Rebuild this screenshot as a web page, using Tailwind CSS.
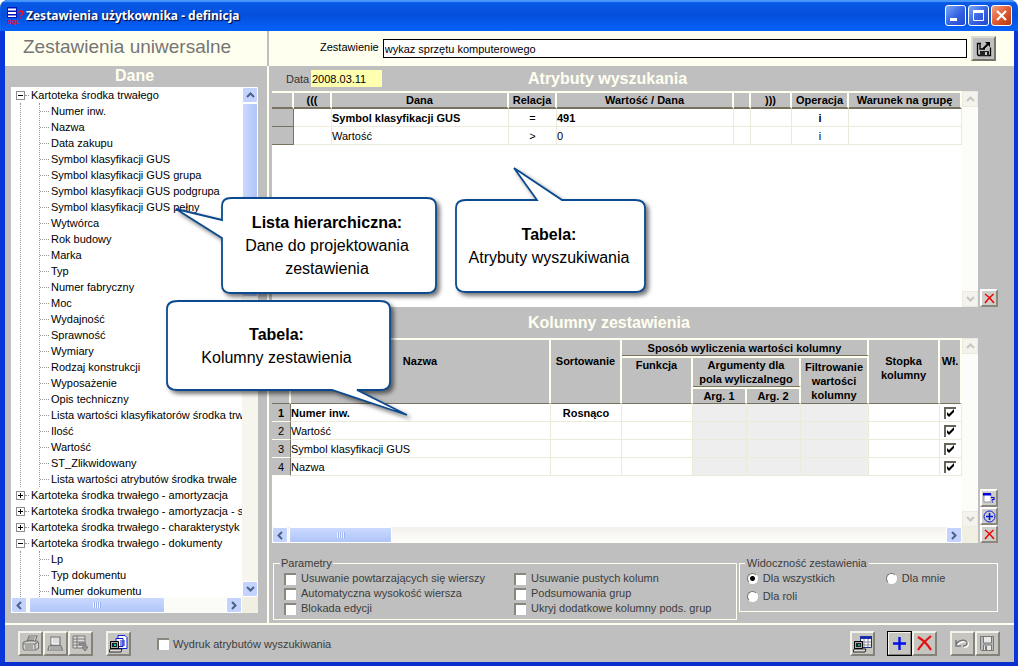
<!DOCTYPE html>
<html lang="pl">
<head>
<meta charset="utf-8">
<title>Zestawienia użytkownika - definicja</title>
<script src="https://cdn.jsdelivr.net/npm/@tailwindcss/browser@4"></script>
</head>
<body class="bg-white font-['Liberation_Sans',Arial,sans-serif] text-[11px] leading-4 text-black">
<svg class="hidden">
  <symbol id="up" viewBox="0 0 9 6"><path d="M1 5 4.500 1.500 8 5" fill="none" stroke="currentColor" stroke-width="2"/></symbol>
  <symbol id="down" viewBox="0 0 9 6"><path d="M1 1 4.500 4.500 8 1" fill="none" stroke="currentColor" stroke-width="2"/></symbol>
  <symbol id="left" viewBox="0 0 6 9"><path d="M5 1 1.500 4.500 5 8" fill="none" stroke="currentColor" stroke-width="2"/></symbol>
  <symbol id="right" viewBox="0 0 6 9"><path d="M1 1 4.500 4.500 1 8" fill="none" stroke="currentColor" stroke-width="2"/></symbol>
  <symbol id="tick" viewBox="0 0 12 12"><path d="M3 5v3l2 2 5-5V2L5 7z" fill="#000"/></symbol>
  <symbol id="cross" viewBox="0 0 11 11"><path d="M1 1c3 2 6 5 9 9M9.500 1C6 4 3 7 1 10" fill="none" stroke="#e00" stroke-width="1.500"/></symbol>
</svg>

<div class="relative flex h-screen flex-col overflow-hidden rounded-t-lg border-b-4 border-[#0a2fd0] bg-[#bfbfbf]">
  <!-- title bar -->
  <header class="flex h-[31px] shrink-0 items-center bg-linear-to-b from-[#0a5be8] via-[#0450dd] to-[#0662fb] pr-1.5 pl-[7px] shadow-[inset_0_2px_1px_#4a97fb]">
    <svg class="h-[18px] w-[17px]" viewBox="0 0 17 18"><path d="M0 0h10v11H0z" fill="#0010b8"/><path d="M1 1.500h8v2H1zM1 5h8v2H1zM1 8.500h8V10H1z" fill="#fff"/><path d="M12 6c0-2.500 4-2.500 4 0 0 1.500-2 1.500-2 3M14 10v1.500" fill="none" stroke="#f01020" stroke-width="1.600"/><text x="0" y="17" font-family="Liberation Sans" font-size="6" font-weight="700" fill="#f01020">SQL</text></svg>
    <h1 class="ml-0.5 flex-1 font-['Noto_Sans',sans-serif] text-xs font-bold text-white [text-shadow:1px_1px_1px_#003]">Zestawienia użytkownika - definicja</h1>
    <div class="flex gap-0.5">
      <button aria-label="Minimalizuj" class="h-[21px] w-[21px] rounded-[3px] border border-white bg-linear-to-br from-[#7fa6f5] via-[#3a66e4] to-[#1d48cc]"><svg viewBox="0 0 19 19"><path d="M4 12h7v3H4z" fill="#fff"/></svg></button>
      <button aria-label="Maksymalizuj" class="h-[21px] w-[21px] rounded-[3px] border border-white bg-linear-to-br from-[#7fa6f5] via-[#3a66e4] to-[#1d48cc]"><svg viewBox="0 0 19 19"><path d="M4.500 5v9.500h10V5" fill="none" stroke="#fff"/><path d="M4 4h11v3H4z" fill="#fff"/></svg></button>
      <button aria-label="Zamknij" class="h-[21px] w-[21px] rounded-[3px] border border-white bg-linear-to-br from-[#f0a080] via-[#e05a30] to-[#b83808]"><svg viewBox="0 0 19 19"><path d="m5 5 9 9m0-9-9 9" stroke="#fff" stroke-width="2.200"/></svg></button>
    </div>
  </header>

  <div class="flex min-h-0 flex-1 flex-col border-r-4 border-l-[5px] border-r-[#0a35d8] border-l-[#0a35d8]">
    <!-- heading strip -->
    <div class="flex h-[35px] shrink-0 bg-[#fffff0]">
      <div class="w-[264px] border-r-2 border-[#bfbfbf] pt-1 pl-[18px] text-[19px] leading-6 text-[#757575]">Zestawienia uniwersalne</div>
      <div class="flex flex-1 items-center pr-[18px] pl-[51px]">
        <label for="nazwa" class="pb-1">Zestawienie</label>
        <input id="nazwa" value="wykaz sprzętu komputerowego" class="ml-1 h-[19px] min-w-0 flex-1 border border-black bg-white px-px">
        <button aria-label="Zapisz jako" class="ml-1 grid h-[25px] w-[25px] place-items-center border-2 border-t-[#dddcd4] border-r-[#77746c] border-b-[#77746c] border-l-[#dddcd4] bg-[#bfbfbf]"><svg class="h-4 w-4" viewBox="0 0 16 16"><path d="M5 2.500H1.500v11l1 1h12v-8M4 2.500V8h5" fill="none" stroke="#000" stroke-width="1.300"/><path d="M4 10h9v5H4z" fill="#222"/><path d="M9 11h2v3H9z" fill="#ccc"/><path d="m7 8 5-5" stroke="#000" stroke-width="1.800"/><path d="M9 1h5v5z" fill="#000"/></svg></button>
      </div>
    </div>

    <main class="flex min-h-0 flex-1">
      <!-- data tree -->
      <section class="flex w-[264px] shrink-0 flex-col border-r-2 border-[#fffff0] pr-[9px] pb-2.5 pl-1.5">
        <h2 class="h-[21px] shrink-0 text-center text-base leading-5 font-bold text-[#fffff0]">Dane</h2>
        <div class="flex min-h-0 flex-1">
          <div class="min-w-0 flex-1 overflow-hidden bg-white pl-[5px] whitespace-nowrap">
            <ul>
              <li>
                <div class="flex h-4 items-center"><button aria-label="Zwiń" class="grid h-[9px] w-[9px] shrink-0 place-items-center border border-[#8c8c8c] bg-white"><span class="h-px w-[5px] bg-black"></span></button><span class="mr-0.5 w-1 shrink-0 border-t border-dotted border-[#999]"></span>Kartoteka środka trwałego</div>
                <div class="ml-1 border-l border-dotted border-[#999]">
                  <ul class="ml-[18px] border-l border-dotted border-[#999] [&>li]:flex [&>li]:h-4 [&>li]:items-center [&>li]:before:mr-0.5 [&>li]:before:w-[9px] [&>li]:before:shrink-0 [&>li]:before:border-t [&>li]:before:border-dotted [&>li]:before:border-[#999] [&>li]:before:content-['']">
                    <li>Numer inw.</li><li>Nazwa</li><li>Data zakupu</li><li>Symbol klasyfikacji GUS</li><li>Symbol klasyfikacji GUS grupa</li><li>Symbol klasyfikacji GUS podgrupa</li><li>Symbol klasyfikacji GUS pełny</li><li>Wytwórca</li><li>Rok budowy</li><li>Marka</li><li>Typ</li><li>Numer fabryczny</li><li>Moc</li><li>Wydajność</li><li>Sprawność</li><li>Wymiary</li><li>Rodzaj konstrukcji</li><li>Wyposażenie</li><li>Opis techniczny</li><li>Lista wartości klasyfikatorów środka trw</li><li>Ilość</li><li>Wartość</li><li>ST_Zlikwidowany</li><li>Lista wartości atrybutów środka trwałe</li>
                  </ul>
                </div>
              </li>
              <li class="flex h-4 items-center"><button aria-label="Rozwiń" class="grid h-[9px] w-[9px] shrink-0 place-items-center border border-[#8c8c8c] bg-white"><svg class="h-[5px] w-[5px]" viewBox="0 0 5 5"><path d="M0 2h5v1H0zM2 0h1v5H2z"/></svg></button><span class="mr-0.5 w-1 shrink-0 border-t border-dotted border-[#999]"></span>Kartoteka środka trwałego - amortyzacja</li>
              <li class="flex h-4 items-center"><button aria-label="Rozwiń" class="grid h-[9px] w-[9px] shrink-0 place-items-center border border-[#8c8c8c] bg-white"><svg class="h-[5px] w-[5px]" viewBox="0 0 5 5"><path d="M0 2h5v1H0zM2 0h1v5H2z"/></svg></button><span class="mr-0.5 w-1 shrink-0 border-t border-dotted border-[#999]"></span>Kartoteka środka trwałego - amortyzacja - s</li>
              <li class="flex h-4 items-center"><button aria-label="Rozwiń" class="grid h-[9px] w-[9px] shrink-0 place-items-center border border-[#8c8c8c] bg-white"><svg class="h-[5px] w-[5px]" viewBox="0 0 5 5"><path d="M0 2h5v1H0zM2 0h1v5H2z"/></svg></button><span class="mr-0.5 w-1 shrink-0 border-t border-dotted border-[#999]"></span>Kartoteka środka trwałego - charakterystyk</li>
              <li>
                <div class="flex h-4 items-center"><button aria-label="Zwiń" class="grid h-[9px] w-[9px] shrink-0 place-items-center border border-[#8c8c8c] bg-white"><span class="h-px w-[5px] bg-black"></span></button><span class="mr-0.5 w-1 shrink-0 border-t border-dotted border-[#999]"></span>Kartoteka środka trwałego - dokumenty</div>
                <div class="ml-1 border-l border-dotted border-[#999]">
                  <ul class="ml-[18px] border-l border-dotted border-[#999] [&>li]:flex [&>li]:h-4 [&>li]:items-center [&>li]:before:mr-0.5 [&>li]:before:w-[9px] [&>li]:before:shrink-0 [&>li]:before:border-t [&>li]:before:border-dotted [&>li]:before:border-[#999] [&>li]:before:content-['']">
                    <li>Lp</li><li>Typ dokumentu</li><li>Numer dokumentu</li>
                  </ul>
                </div>
              </li>
            </ul>
          </div>
          <div class="flex w-4 flex-col bg-[#f6f5ee]">
            <button aria-label="W górę" class="grid h-4 place-items-center rounded-xs border border-white bg-[#c3d3fd] text-[#4d6185]"><svg class="h-1.5 w-[9px]"><use href="#up"/></svg></button>
            <div class="h-[194px] rounded-xs border border-white bg-linear-to-r from-[#cad9fe] to-[#b0c5f8]"></div>
            <button aria-label="W dół" class="mt-auto grid h-4 place-items-center rounded-xs border border-white bg-[#c3d3fd] text-[#4d6185]"><svg class="h-1.5 w-[9px]"><use href="#down"/></svg></button>
          </div>
        </div>
        <div class="flex h-4 shrink-0 bg-[#f1efe2]">
          <div class="flex flex-1 bg-[#fbfbf8]">
            <button aria-label="W lewo" class="grid w-4 place-items-center rounded-xs border border-white bg-[#c3d3fd] text-[#4d6185]"><svg class="h-[9px] w-1.5"><use href="#left"/></svg></button>
            <div class="ml-0.5 grid w-[136px] place-items-center rounded-xs border border-white bg-linear-to-b from-[#cad9fe] to-[#b0c5f8]"><span class="h-1.5 w-2 bg-[repeating-linear-gradient(90deg,#eef4fe_0_1px,#9db5ee_1px_2px)]"></span></div>
            <button aria-label="W prawo" class="ml-auto grid w-4 place-items-center rounded-xs border border-white bg-[#c3d3fd] text-[#4d6185]"><svg class="h-[9px] w-1.5"><use href="#right"/></svg></button>
          </div>
          <div class="w-4"></div>
        </div>
      </section>

      <div class="flex min-w-0 flex-1 flex-col pl-[3px]">
        <!-- search attributes -->
        <div class="flex h-[25px] shrink-0 items-center pl-3.5">
          <label for="data" class="w-[25px] text-[#333]">Data</label>
          <input id="data" value="2008.03.11" class="h-[17px] w-[71px] bg-[#ffffb0] pl-px">
          <h2 class="ml-[146px] text-base font-bold text-[#fffff0]">Atrybuty wyszukania</h2>
        </div>
        <div class="flex min-h-0 flex-[216]">
          <div class="min-w-0 flex-1 overflow-hidden bg-white">
            <table class="w-full table-fixed border-separate border-spacing-0 [&_td]:h-[18px] [&_td]:border-r [&_td]:border-b [&_td]:border-[#ecead8] [&_td]:leading-4 [&_td:first-child]:border-[#77735f] [&_td:first-child]:bg-[#bfbfbf] [&_th]:h-[18px] [&_th]:border-t-2 [&_th]:border-r-2 [&_th]:border-b-2 [&_th]:border-t-[#fffff0] [&_th]:border-r-[#fffff0] [&_th]:border-b-[#77735f] [&_th]:bg-[#bfbfbf] [&_th]:leading-[14px]">
              <colgroup><col class="w-[22px]"><col class="w-[38px]"><col class="w-[177px]"><col class="w-12"><col class="w-[177px]"><col class="w-[17px]"><col class="w-[41px]"><col class="w-[57px]"><col></colgroup>
              <thead><tr><th></th><th>(((</th><th>Dana</th><th>Relacja</th><th>Wartość / Dana</th><th></th><th>)))</th><th>Operacja</th><th>Warunek na grupę</th></tr></thead>
              <tbody>
                <tr class="font-bold"><td></td><td></td><td>Symbol klasyfikacji GUS</td><td class="text-center font-normal">=</td><td>491</td><td></td><td></td><td class="text-center">i</td><td></td></tr>
                <tr><td></td><td></td><td>Wartość</td><td class="text-center">&gt;</td><td>0</td><td></td><td></td><td class="text-center">i</td><td></td></tr>
              </tbody>
            </table>
          </div>
          <div class="flex w-4 flex-col justify-between bg-[#fcfcf8] text-[#c9c7ba]">
            <button aria-label="W górę" class="grid h-4 place-items-center border border-[#eceade] bg-[#f4f3ee]"><svg class="h-1.5 w-[9px]"><use href="#up"/></svg></button>
            <button aria-label="W dół" class="grid h-4 place-items-center border border-[#eceade] bg-[#f4f3ee]"><svg class="h-1.5 w-[9px]"><use href="#down"/></svg></button>
          </div>
          <div class="flex w-9 flex-col justify-end pl-0.5">
            <button aria-label="Usuń" class="grid h-[18px] w-[18px] place-items-center border-2 border-t-white border-r-[#8a877c] border-b-[#8a877c] border-l-white bg-[#cfcec8]"><svg class="h-[11px] w-[11px]"><use href="#cross"/></svg></button>
          </div>
        </div>

        <!-- report columns -->
        <h2 class="h-[31px] shrink-0 pl-64 text-base leading-[31px] font-bold text-[#fffff0]">Kolumny zestawienia</h2>
        <div class="flex min-h-0 flex-[205]">
          <div class="flex min-w-0 flex-1 flex-col bg-white">
            <div class="flex min-h-0 flex-1">
              <div class="min-w-0 flex-1 overflow-hidden">
                <table class="w-full table-fixed border-separate border-spacing-0 [&_td]:h-[18px] [&_td]:border-r [&_td]:border-b [&_td]:border-[#ecead8] [&_td]:leading-4 [&_td:first-child]:border-r-[#77735f] [&_td:first-child]:border-b-[#fffff0] [&_td:first-child]:bg-[#bfbfbf] [&_td:first-child]:text-center [&_th]:border-t-2 [&_th]:border-r-2 [&_th]:border-b [&_th]:border-t-[#fffff0] [&_th]:border-r-[#fffff0] [&_th]:border-b-[#77735f] [&_th]:bg-[#bfbfbf] [&_th]:leading-[14px]">
                  <colgroup><col class="w-[19px]"><col><col class="w-[71px]"><col class="w-[71px]"><col class="w-[54px]"><col class="w-[54px]"><col class="w-[68px]"><col class="w-[71px]"><col class="w-[22px]"></colgroup>
                  <thead>
                    <tr class="h-[18px]"><th rowspan="3"></th><th rowspan="3" class="pt-3.5 align-top">Nazwa</th><th rowspan="3" class="pt-3.5 align-top">Sortowanie</th><th colspan="4">Sposób wyliczenia wartości kolumny</th><th rowspan="3" class="pt-3.5 align-top">Stopka<br>kolumny</th><th rowspan="3" class="pt-3.5 align-top">Wł.</th></tr>
                    <tr class="h-[31px]"><th rowspan="2" class="align-top">Funkcja</th><th colspan="2">Argumenty dla<br>pola wyliczalnego</th><th rowspan="2">Filtrowanie<br>wartości<br>kolumny</th></tr>
                    <tr class="h-[17px]"><th>Arg. 1</th><th>Arg. 2</th></tr>
                  </thead>
                  <tbody>
                    <tr class="font-bold"><td>1</td><td>Numer inw.</td><td class="text-center">Rosnąco</td><td></td><td class="bg-[#eee]"></td><td class="bg-[#eee]"></td><td class="bg-[#eee]"></td><td></td><td class="pl-1"><label class="grid w-3"><input type="checkbox" checked aria-label="Włącz Numer inw." class="h-3 w-3 appearance-none border-t-2 border-l-2 border-[#66645a] bg-white [grid-area:1/1]"><svg class="h-3 w-3 [grid-area:1/1]"><use href="#tick"/></svg></label></td></tr>
                    <tr><td>2</td><td>Wartość</td><td></td><td></td><td class="bg-[#eee]"></td><td class="bg-[#eee]"></td><td class="bg-[#eee]"></td><td></td><td class="pl-1"><label class="grid w-3"><input type="checkbox" checked aria-label="Włącz Wartość" class="h-3 w-3 appearance-none border-t-2 border-l-2 border-[#66645a] bg-white [grid-area:1/1]"><svg class="h-3 w-3 [grid-area:1/1]"><use href="#tick"/></svg></label></td></tr>
                    <tr><td>3</td><td>Symbol klasyfikacji GUS</td><td></td><td></td><td class="bg-[#eee]"></td><td class="bg-[#eee]"></td><td class="bg-[#eee]"></td><td></td><td class="pl-1"><label class="grid w-3"><input type="checkbox" checked aria-label="Włącz Symbol klasyfikacji GUS" class="h-3 w-3 appearance-none border-t-2 border-l-2 border-[#66645a] bg-white [grid-area:1/1]"><svg class="h-3 w-3 [grid-area:1/1]"><use href="#tick"/></svg></label></td></tr>
                    <tr><td>4</td><td>Nazwa</td><td></td><td></td><td class="bg-[#eee]"></td><td class="bg-[#eee]"></td><td class="bg-[#eee]"></td><td></td><td class="pl-1"><label class="grid w-3"><input type="checkbox" checked aria-label="Włącz Nazwa" class="h-3 w-3 appearance-none border-t-2 border-l-2 border-[#66645a] bg-white [grid-area:1/1]"><svg class="h-3 w-3 [grid-area:1/1]"><use href="#tick"/></svg></label></td></tr>
                  </tbody>
                </table>
              </div>
              <div class="flex w-4 flex-col justify-between bg-[#fcfcf8] text-[#c9c7ba]">
                <button aria-label="W górę" class="grid h-4 place-items-center border border-[#eceade] bg-[#f4f3ee]"><svg class="h-1.5 w-[9px]"><use href="#up"/></svg></button>
                <button aria-label="W dół" class="grid h-4 place-items-center border border-[#eceade] bg-[#f4f3ee]"><svg class="h-1.5 w-[9px]"><use href="#down"/></svg></button>
              </div>
            </div>
            <div class="flex h-4 shrink-0 bg-[#f1efe2]">
              <div class="flex flex-1 bg-linear-to-b from-[#f3f1ec] to-[#fefefb]">
                <button aria-label="W lewo" class="grid w-4 place-items-center rounded-xs border border-white bg-[#c3d3fd] text-[#4d6185]"><svg class="h-[9px] w-1.5"><use href="#left"/></svg></button>
                <div class="ml-px grid w-[103px] place-items-center rounded-xs border border-white bg-linear-to-b from-[#cad9fe] to-[#b0c5f8]"><span class="h-1.5 w-2 bg-[repeating-linear-gradient(90deg,#eef4fe_0_1px,#9db5ee_1px_2px)]"></span></div>
                <button aria-label="W prawo" class="ml-auto grid w-4 place-items-center rounded-xs border border-white bg-[#c3d3fd] text-[#4d6185]"><svg class="h-[9px] w-1.5"><use href="#right"/></svg></button>
              </div>
              <div class="w-4"></div>
            </div>
          </div>
          <div class="flex w-9 flex-col justify-end pl-0.5">
            <button aria-label="Właściwości" class="grid h-[18px] w-[18px] place-items-center border-2 border-t-white border-r-[#8a877c] border-b-[#8a877c] border-l-white bg-[#cfcec8]"><svg class="h-3 w-3" viewBox="0 0 12 12"><path d="M1 2h7v8H1z" fill="#fff" stroke="#667" stroke-width=".6"/><path d="M0 1h8v2.500H0z" fill="#00d"/><path d="M8 5.500h3v2H9.500v1M9.500 9.500v1" fill="none" stroke="#00c" stroke-width="1.100"/></svg></button>
            <button aria-label="Dodaj" class="grid h-[18px] w-[18px] place-items-center border-2 border-t-white border-r-[#8a877c] border-b-[#8a877c] border-l-white bg-[#cfcec8]"><svg class="h-[13px] w-[13px]" viewBox="0 0 13 13"><circle cx="6.500" cy="6.500" r="5.500" fill="none" stroke="#0018d8"/><path d="M6.500 3v7M3 6.500h7" stroke="#0018d8" stroke-width="1.600"/></svg></button>
            <button aria-label="Usuń" class="grid h-[18px] w-[18px] place-items-center border-2 border-t-white border-r-[#8a877c] border-b-[#8a877c] border-l-white bg-[#cfcec8]"><svg class="h-[11px] w-[11px]"><use href="#cross"/></svg></button>
          </div>
        </div>

        <!-- options -->
        <div class="flex h-20 shrink-0 items-start gap-0.5 pt-3 pr-4 pl-px text-[#3c3c3c]">
          <fieldset class="h-[65px] flex-[466] border border-[#fffff0] pl-2.5">
            <legend class="-ml-1 px-px leading-4">Parametry</legend>
            <div class="grid w-max grid-cols-[230px_auto] leading-[15px] [&_input]:mr-[5px] [&_input]:h-3 [&_input]:w-3 [&_input]:appearance-none [&_input]:border-t-2 [&_input]:border-l-2 [&_input]:border-[#8a887e] [&_input]:bg-white [&_label]:flex [&_label]:items-center">
              <label><input type="checkbox">Usuwanie powtarzających się wierszy</label>
              <label><input type="checkbox">Usuwanie pustych kolumn</label>
              <label><input type="checkbox">Automatyczna wysokość wiersza</label>
              <label><input type="checkbox">Podsumowania grup</label>
              <label><input type="checkbox">Blokada edycji</label>
              <label><input type="checkbox">Ukryj dodatkowe kolumny pods. grup</label>
            </div>
          </fieldset>
          <fieldset class="h-12 flex-[258] border border-[#fffff0] pl-[7px] min-h-[57px]">
            <legend class="-ml-0.5 px-0.5 leading-4">Widoczność zestawienia</legend>
            <div class="grid grid-cols-[139px_auto] gap-y-[3px] leading-[15px] [&_input]:mr-[5px] [&_input]:h-[11px] [&_input]:w-[11px] [&_input]:appearance-none [&_input]:rounded-full [&_input]:border [&_input]:border-t-[#77756b] [&_input]:border-r-white [&_input]:border-b-white [&_input]:border-l-[#77756b] [&_input]:bg-white [&_input:checked]:bg-[radial-gradient(circle,#000_2px,#fff_3px)] [&_label]:flex [&_label]:items-center">
              <label><input type="radio" name="widok" checked>Dla wszystkich</label>
              <label><input type="radio" name="widok">Dla mnie</label>
              <label><input type="radio" name="widok">Dla roli</label>
            </div>
          </fieldset>
        </div>
      </div>
    </main>

    <!-- toolbar -->
    <footer class="flex h-[39px] shrink-0 items-center border-t-2 border-[#fffff0] pr-3.5 pl-[13px] [&_button]:grid [&_button]:h-[25px] [&_button]:w-[25px] [&_button]:place-items-center [&_button]:border-2 [&_button]:border-t-[#f4f3ea] [&_button]:border-r-[#85827a] [&_button]:border-b-[#85827a] [&_button]:border-l-[#f4f3ea] [&_button]:bg-[#c6c5c0] [&_svg]:h-[19px] [&_svg]:w-[19px]">
      <button aria-label="Drukuj"><svg viewBox="0 0 19 19"><path d="M6 8 8 2h8l-2 6M8 4h6M7 6h6M2 9l3-2h11l1.500 2v5L15 16H3l-1-2zM2 10h12v5M14 10l3-2M4 12h8M4 14h8" fill="#d8d8d4" stroke="#777" stroke-width="1.100"/></svg></button>
      <button aria-label="Podgląd"><svg viewBox="0 0 19 19"><path d="M5 3h9v8H5zM3 12h12l1.500 4H2zM4 14h11" fill="#ddd" stroke="#777" stroke-width="1.200"/><path d="M6 4v6h7" fill="none" stroke="#fff"/></svg></button>
      <button aria-label="Eksport"><svg viewBox="0 0 19 19"><path d="M2 2h12v12H2zM2 5h12M2 8h12M2 11h12M6 2v12" fill="#ddd" stroke="#777"/><path d="M8 9h5c2 0 2 1 2 4h2l-3 4-3-4h2v-2H8z" fill="#999" stroke="#777"/></svg></button>
      <button aria-label="Podgląd raportu" class="ml-[13px]"><svg viewBox="0 0 19 19"><path d="M9 1.500h7l2 2v11H9z" fill="#fff" stroke="#1020d0"/><path d="M7 4.500h7v8H7z" fill="#fff" stroke="#1020d0"/><path d="M11 7h5M11 9h5M11 11h5" stroke="#1020d0"/><path d="M1.500 7.500h8v7h-8z" fill="#aaa" stroke="#000"/><path d="M3 9h5v4H3z" fill="#222"/><path d="M5 10h2v2H5z" fill="#0cc"/><path d="M1 15h12l-1 3H0z" fill="#ddd" stroke="#000" stroke-width=".8"/></svg></button>
      <label class="ml-[26px] flex items-center gap-1 text-[#3c3c3c]"><input type="checkbox" class="h-3 w-3 appearance-none border-t-2 border-l-2 border-[#8a887e] bg-white">Wydruk atrybutów wyszukiwania</label>
      <button aria-label="Podgląd tabeli" class="ml-auto"><svg viewBox="0 0 19 19"><path d="M7.500 2.500h11v11h-11z" fill="#fff" stroke="#203080"/><path d="M7 2h12v3H7z" fill="#1a2ca8"/><path d="M8 8h10M8 11h10M11 5v8M15 5v8" stroke="#889"/><path d="M1.500 7.500h8v7h-8z" fill="#aaa" stroke="#000"/><path d="M3 9h5v4H3z" fill="#222"/><path d="M5 10h2v2H5z" fill="#0a8"/><path d="M1 15h12l-1 3H0z" fill="#ddd" stroke="#000" stroke-width=".8"/></svg></button>
      <button aria-label="Dodaj zestawienie" class="ml-3 outline outline-black -outline-offset-1"><svg viewBox="0 0 19 19"><path d="M9.500 3v13M3 9.500h13" stroke="#0010e8" stroke-width="2.400"/></svg></button>
      <button aria-label="Usuń zestawienie"><svg viewBox="0 0 19 19"><path d="M3 3c5 3 10 8 13 13M16 2C10 7 6 11 3 16" fill="none" stroke="#e41010" stroke-width="2.200"/></svg></button>
      <button aria-label="Cofnij" class="ml-[13px]"><svg viewBox="0 0 19 19"><path d="M4 12c3-6 11-6 11-2 0 3-2 3-4 3" fill="none" stroke="#fff" stroke-width="2"/><path d="M3 11c3-6 11-6 11-2 0 3-2 3-4 3M3 6v6h5" fill="none" stroke="#777" stroke-width="1.500"/></svg></button>
      <button aria-label="Zapisz"><svg viewBox="0 0 19 19"><path d="M2.500 2.500h13v14h-12l-1-1z" fill="#bbb" stroke="#777"/><path d="M5.500 3v6h8V3M5.500 16v-5h8v5" fill="#e8e8e4" stroke="#777"/><path d="M7 12h2v4H7z" fill="#777"/></svg></button>
    </footer>
  </div>

  <!-- callouts floating above the form -->
  <svg class="pointer-events-none absolute top-0 left-0 h-[430px] w-[660px] drop-shadow-[3px_3px_2px_#0008]" viewBox="0 0 660 430" fill="#fff" stroke="#0b4a8f" stroke-width="1.800">
    <path d="M231 198H427Q436 198 436 206V285Q436 293 427 293H231Q222 293 222 285V238L176 209 222 220V206Q222 198 231 198Z"/>
    <path d="M466 200H537L514 168 562 200H635Q645 200 645 208V284Q645 292 635 292H466Q456 292 456 284V208Q456 200 466 200Z"/>
    <path d="M178 301H380Q390 301 390 309V382Q390 390 380 390H357L407 415 332 390H178Q167 390 167 382V309Q167 301 178 301Z"/>
  </svg>
  <div class="absolute top-[211px] left-[222px] w-[210px] text-center text-base leading-[23px]"><b>Lista hierarchiczna:</b><br>Dane do projektowania<br>zestawienia</div>
  <div class="absolute top-[223px] left-[456px] w-[186px] text-center text-base leading-[23px]"><b>Tabela:</b><br>Atrybuty wyszukiwania</div>
  <div class="absolute top-[323px] left-[167px] w-[219px] text-center text-base leading-[23px]"><b>Tabela:</b><br>Kolumny zestawienia</div>
</div>
</body>
</html>
